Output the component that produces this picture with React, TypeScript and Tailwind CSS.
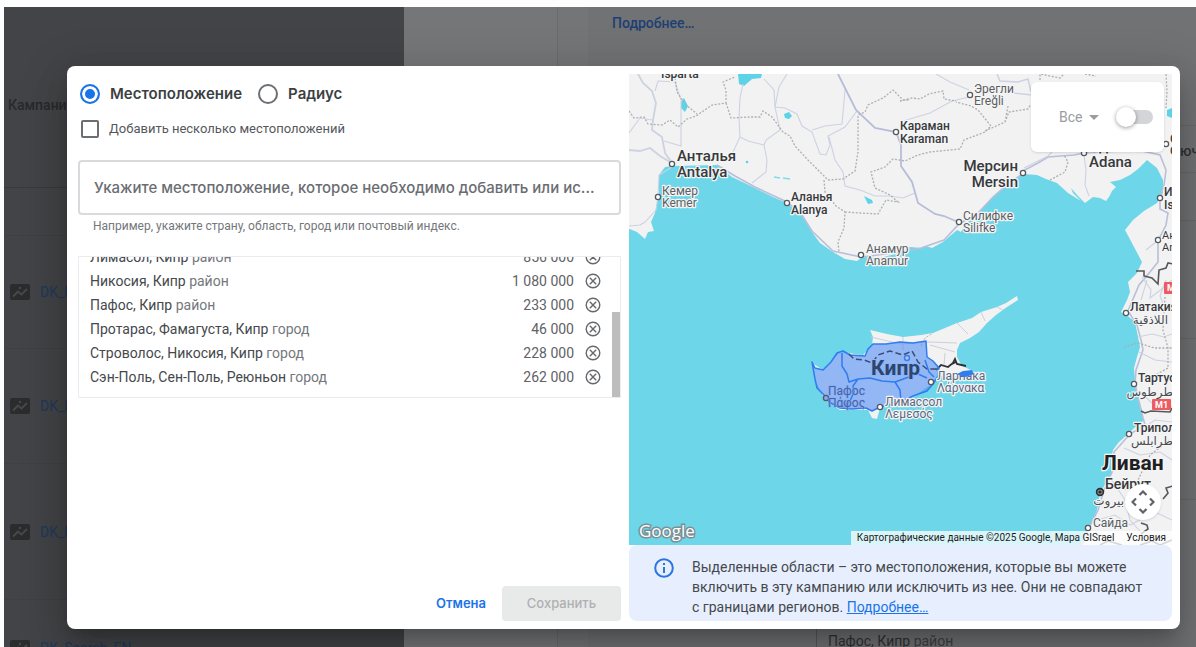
import { useState } from "react";
import clsx from "clsx";

interface Location {
  name: string;
  type: string;
  reach: string;
}

interface MapLabel {
  x: number;
  y: number;
  lines: string[];
  size: number;
  gap: number;
  weight?: number;
  color?: string;
  halo?: string;
  anchor?: "start" | "middle" | "end";
  dot?: [number, number];
}

const initialLocations: Location[] = [
  { name: "Лимасол, Кипр", type: "район", reach: "856 000" },
  { name: "Никосия, Кипр", type: "район", reach: "1 080 000" },
  { name: "Пафос, Кипр", type: "район", reach: "233 000" },
  { name: "Протарас, Фамагуста, Кипр", type: "город", reach: "46 000" },
  { name: "Строволос, Никосия, Кипр", type: "город", reach: "228 000" },
  { name: "Сэн-Поль, Сен-Поль, Реюньон", type: "город", reach: "262 000" },
];

const labels: MapLabel[] = [
  { x: 661, y: 78, lines: ["Isparta"], size: 12, gap: 12, weight: 500 },
  { x: 677, y: 161, lines: ["Анталья", "Antalya"], size: 15, gap: 16, weight: 500, dot: [672, 164] },
  { x: 662, y: 195, lines: ["Кемер", "Kemer"], size: 12, gap: 12, color: "#5a5f64", dot: [658, 197] },
  { x: 791, y: 201, lines: ["Аланья", "Alanya"], size: 12, gap: 13, weight: 500, dot: [787, 203] },
  { x: 866, y: 253, lines: ["Анамур", "Anamur"], size: 12, gap: 12, color: "#5a5f64", dot: [861, 255] },
  { x: 900, y: 130, lines: ["Караман", "Karaman"], size: 12, gap: 13, weight: 500, dot: [896, 132] },
  { x: 974, y: 93, lines: ["Эрегли", "Ereğli"], size: 12, gap: 12, color: "#5a5f64", dot: [970, 95] },
  { x: 1018, y: 171, lines: ["Мерсин", "Mersin"], size: 15, gap: 16, weight: 500, anchor: "end", dot: [1023, 173] },
  { x: 963, y: 220, lines: ["Силифке", "Silifke"], size: 12, gap: 12, color: "#5a5f64", dot: [959, 222] },
  { x: 1089, y: 151, lines: ["Адана", "Adana"], size: 15, gap: 16, weight: 500, dot: [1084, 153] },
  { x: 1170, y: 143, lines: ["Ос", "Os"], size: 12, gap: 12, weight: 500, dot: [1166, 144] },
  { x: 1164, y: 196, lines: ["Иск", "Isk"], size: 12, gap: 13, weight: 500, dot: [1160, 198] },
  { x: 1162, y: 239, lines: ["Ант", "Ant"], size: 11, gap: 12, dot: [1158, 240] },
  { x: 1130, y: 311, lines: ["Латакия"], size: 12, gap: 12, weight: 500, dot: [1126, 313] },
  { x: 1138, y: 382, lines: ["Тартус"], size: 12, gap: 12, weight: 500, dot: [1134, 384] },
  { x: 1134, y: 432, lines: ["Триполи"], size: 12, gap: 12, weight: 500, dot: [1129, 434] },
  { x: 1105, y: 489, lines: ["Бейрут"], size: 14, gap: 12, weight: 500 },
  { x: 1093, y: 527, lines: ["Сайда"], size: 12, gap: 12, color: "#5a5f64", dot: [1088, 528] },
];

const cyprusLabels: MapLabel[] = [
  { x: 937, y: 380, lines: ["Ларнака", "Λάρνακα"], size: 12, gap: 12, color: "#5b6880", dot: [931, 382] },
  { x: 885, y: 406, lines: ["Лимассол", "Λεμεσός"], size: 12, gap: 12, color: "#5b6880", dot: [880, 407] },
  { x: 828, y: 395, lines: ["Пафос", "Πάφος"], size: 12, gap: 12, color: "#4665a8", halo: "#86aaf5", dot: [826, 398] },
];

const arabicLabels = [
  { x: 1168, y: 324, text: "اللاذقية" },
  { x: 1173, y: 396, text: "طرطوس" },
  { x: 1173, y: 445, text: "طرابلس" },
  { x: 1124, y: 505, text: "بيروت" },
];

const Label = ({ label }: { label: MapLabel }) => (
  <g>
    {label.dot && (
      <circle
        cx={label.dot[0]}
        cy={label.dot[1]}
        r={2.6}
        fill={label.halo ?? "#fff"}
        stroke="#55595e"
        strokeWidth={1.3}
      />
    )}
    {label.lines.map((line, i) => (
      <text
        key={line}
        x={label.x}
        y={label.y + i * label.gap}
        fontSize={label.size}
        fontWeight={label.weight ?? 400}
        fill={label.color ?? "#37393c"}
        textAnchor={label.anchor ?? "start"}
        stroke={label.halo ?? "#f5f5f5"}
        strokeWidth={label.halo ? 1 : 2.5}
        strokeLinejoin="round"
        paintOrder="stroke"
      >
        {line}
      </text>
    ))}
  </g>
);

const MapDrawing = () => (
  <svg
    viewBox="629 74 543 471"
    preserveAspectRatio="xMidYMid slice"
    className="block h-full w-full font-['Roboto','Liberation_Sans','DejaVu_Sans',sans-serif]"
    role="img"
    aria-label="Карта"
  >
    <rect x="629" y="74" width="543" height="471" fill="#6dd6e8" />

    {/* mainland */}
    <path
      fill="#f2f2f3"
      d="M620 60H1180V550H1079L1083 540L1090 527L1097 510L1100 493L1107 481L1112 473L1111 460L1113 450L1119 442L1127 435L1133 429L1143 421L1142 410L1138 397L1135 380L1134 368L1137 357L1140 347L1138 337L1135 322L1129 317L1121 312L1127 300L1130 292L1128 282L1137 273L1142 262L1133 245L1125 230L1133 220L1144 211L1157 203L1163 193L1163 180L1157 168L1147 160L1138 169L1130 175L1120 180L1110 182L1116 187L1112 191L1109 197L1106 201L1100 198L1093 197L1085 203L1078 196L1071 188L1073 193L1081 201L1068 193L1057 183L1046 179L1037 175L1023 174L1010 183L993 197L985 205L978 214L965 224L961 232L957 230L943 242L932 248L926 246L921 248L910 247L902 252L895 254L880 258L862 257L857 261L845 259L833 252L820 243L812 232L802 215L787 203L773 197L753 187L732 177L717 165L673 166L665 167L659 175L659 193L655 213L651 222L654 231L648 232L645 239L637 232L620 225Z"
    />
    <path
      fill="#f2f2f3"
      d="M870 330L887 334L903 337L921 335L933 333L957 323L972 318L981 312L997 307L1006 303L1017 296L1018 300L1007 307L996 315L987 323L979 332L970 338L960 343L957 350L957 357L962 366L973 371L972 377L963 378L950 375L940 376L933 383L913 397L890 405L880 408L877 419L872 418L868 410L850 410L840 410L825 400L815 380L812 363L823 370L840 352L863 355L872 345L873 337Z"
    />

    {/* lakes */}
    <g fill="#5cd3e6">
      <path d="M738 74H762L761 78L752 79L744 86L739 84Z" />
      <path d="M681 102L684 98L688 106L685 112L681 108Z" />
      <path d="M784 114L789 112L792 116L789 119L785 118Z" />
      <path d="M864 196L872 200L873 203L868 204Z" />
      <path d="M1167 110L1172 108V118L1167 116Z" />
      <circle cx="747" cy="162" r="1.3" />
      <path d="M774 177L780 178M783 178L790 179" stroke="#7fdce9" strokeWidth="1.3" />
    </g>

    {/* roads */}
    <g fill="none" stroke="#cdd2e2" strokeWidth="1.1">
      <path d="M638 74L643 83L652 91L656 103L653 120L652 130L662 137L665 153L672 163" strokeWidth="1.8" />
      <path d="M629 150L640 151L650 148L660 156L670 162" strokeWidth="1.8" />
      <path d="M629 133L640 118L652 120M681 132L681 146L664 141M655 91L658 81L675 82L681 100L681 132" />
      <path d="M672 167L659 175L658 196L656 210L645 222L640 225L629 226" />
      <path d="M717 165L735 176L755 187L787 202L802 215L812 231L833 251L861 257" stroke="#b9bfd8" strokeWidth="1.6" />
      <path d="M743 84L740 98L739 118L740 137L733 152M740 137L748 141L764 145L767 160L766 172L752 183" />
      <path d="M764 79L774 90L775 107L780 130L766 140L764 145M775 107L785 108L797 114L802 126L812 132L820 154L826 155L830 145L828 136L845 127L857 111" />
      <path d="M787 74L779 87L775 107M812 130L825 126L842 124L845 90M829 137L835 160L843 172L845 186L860 190L875 196L890 196L903 198L915 193" />
      <path d="M838 74L856 110L875 128L896 132L901 145L901 166L912 182L918 203L935 214L944 216L958 222" stroke="#b6bdd8" strokeWidth="1.8" />
      <path d="M936 74L950 82L969 90M969 97L952 101L930 113L903 121" />
      <path d="M997 74L1000 81L1018 82L1028 79L1031 92M1013 93L1032 95" strokeWidth="1.6" />
      <path d="M1021 175L1008 184L993 197L978 213L959 224L944 240L921 248L900 252L862 257" stroke="#b9bfd8" strokeWidth="1.6" />
      <path d="M1021 172L1038 163L1048 157L1074 155L1084 153L1120 151L1142 151L1160 155L1166 170L1164 185L1160 198L1160 209L1168 213L1166 225L1158 241L1158 262L1150 272L1139 285L1128 311L1137 325L1141 340L1143 350L1136 370L1135 384L1141 410L1145 425L1130 434L1114 452L1113 470L1104 490L1098 510L1088 530L1082 545" stroke="#b9bfd8" strokeWidth="1.6" />
      <path d="M1024 168L1048 156L1052 152M1084 155L1086 170L1085 185L1089 196" />
      <path d="M1139 352L1155 360L1172 362M1138 337L1152 334L1164 337L1172 334M1142 277L1151 290L1150 298L1163 288L1172 280M1141 393L1152 403L1172 407" />
      <path d="M1140 430L1155 420L1172 422M1124 448L1140 455L1160 452L1172 460M1112 480L1125 500L1130 520L1148 540M1097 520L1115 515L1130 525L1155 512L1172 520" />
      <path d="M1146 250L1156 242M1147 280L1141 300M1166 280L1160 296L1166 310" />
    </g>

    {/* province borders */}
    <g fill="none" stroke="#adafb1" strokeWidth="1.3" strokeDasharray="2 1.6">
      <path d="M629 111L634 118L644 117L648 124L662 125L670 120L678 127L687 119L696 116L712 105L726 103L726 90L723 82L735 77" />
      <path d="M675 78L677 92L685 104L697 114M726 103L731 118L750 117L760 117L763 111L772 117L783 132L790 136L795 146L808 160L820 172L828 180L843 179L855 171L858 152L858 115L865 112L868 105L883 98L893 90L903 100L910 100" />
      <path d="M824 180L825 192L836 206L845 212L844 228L838 242L839 252M845 212L860 213L878 214L886 200L898 202L890 195L875 188L871 172L885 167L893 159L905 161L918 155L930 152L960 149L964 140L985 132L991 126L978 110L971 106L956 102" />
      <path d="M900 101L912 98L920 99L929 94L943 91L944 99L956 101M985 131L1005 122L1009 112L1028 109L1031 104M1005 122L1008 106" />
      <path d="M1040 80L1040 74L1060 78L1064 74M1085 74L1096 76M1166 74L1167 92L1166 108M1050 180L1065 172L1068 162L1064 155" />
      <path d="M1124 347L1138 343L1155 348L1172 348M1165 297L1163 330L1168 348L1168 368L1157 374M1170 440L1150 455L1138 480L1125 490" />
    </g>

    {/* country borders */}
    <g fill="none" stroke="#55575a" strokeWidth="1.6">
      <path d="M1136 271L1144 271L1144 276L1152 278L1158 284L1159 270L1166 268L1168 263L1173 264" />
      <path d="M1141 411L1145 413L1151 411L1170 412L1172 408" />
      <path d="M1163 499L1168 493L1166 488L1173 486M1141 523L1147 525L1148 529L1141 534M1100 545L1108 541L1122 545M1140 545L1152 541L1160 545L1172 540" />
    </g>

    {/* cyprus details */}
    <g fill="none">
      <path
        d="M871 337L900 344L930 342L957 343M903 337L903 350M957 323L968 334M981 312L985 321M945 353L944 365M930 345L955 352M997 307L1003 310"
        stroke="#cdd0da"
      />
      <path d="M921 346L925 338L933 333" stroke="#b3b5b7" strokeDasharray="2 1.6" />
      <path
        d="M936 370L941 365L948 367L953 363L955 359L957 364L966 366M952 364L956 362"
        stroke="#2f3136"
        strokeWidth="1.8"
      />
    </g>
    <g stroke="#2f7df0" strokeWidth="1.5" strokeLinejoin="round">
      <path
        fill="#4c8bf5"
        fillOpacity="0.58"
        d="M812 362L815 368L823 370L831 362L837 353L843 351L850 355L865 356L868 349L873 344L886 344L900 342L913 343L926 341L927 357L933 361L939 368L938 376L933 384L927 391L913 396L900 403L888 405L880 407L872 411L866 408L852 409L840 408L829 402L824 395L817 388L815 379Z"
      />
      <path
        fill="none"
        d="M842 353L842 366L847 374L849 382L858 379L870 378L882 381L895 382L906 378L918 374L927 378M858 379L853 386L854 392L850 401L845 405M895 382L900 390L901 401M925 360L929 372L934 377"
      />
    </g>
    <path
      d="M849 354L854 359L864 360L872 363L878 355L890 351L903 355L912 351L918 362L927 369L937 369"
      fill="none"
      stroke="#3c4c73"
      strokeWidth="1.5"
      strokeDasharray="6 3"
    />
    <circle cx="907" cy="358" r="2.5" fill="#a4c4fb" stroke="#3f7ce4" strokeWidth="1.4" />
    {cyprusLabels.map((label) => (
      <Label key={label.lines[0]} label={label} />
    ))}
    <path fill="#2f7df0" d="M957 374L963 371L972 370L974 374L966 377L961 376Z" />
    <text
      x="871"
      y="375"
      fontSize="21"
      fontWeight="700"
      fill="#2e456f"
      stroke="#8cb3f8"
      strokeWidth="2"
      paintOrder="stroke"
    >
      Кипр
    </text>

    {labels.map((label) => (
      <Label key={label.lines[0]} label={label} />
    ))}
    <circle cx="1100" cy="492" r="3.4" fill="#8b8d90" stroke="#2b2c2e" strokeWidth="1.6" />
    <circle cx="1100" cy="492" r="1.6" fill="#2b2c2e" />
    {arabicLabels.map((label) => (
      <text
        key={label.text}
        x={label.x}
        y={label.y}
        fontSize="12"
        fill="#4a4d51"
        textAnchor="end"
        stroke="#f5f5f5"
        strokeWidth="2"
        paintOrder="stroke"
      >
        {label.text}
      </text>
    ))}
    <text
      x="1102"
      y="470"
      fontSize="21"
      fontWeight="700"
      fill="#1f2022"
      stroke="#f5f5f5"
      strokeWidth="2.5"
      paintOrder="stroke"
    >
      Ливан
    </text>

    {/* motorway shields */}
    <g fill="#ee5c62">
      <rect x="1152" y="399" width="19" height="11" rx="1" />
      <rect x="1164" y="282" width="19" height="12" rx="1" />
    </g>
    <g fill="#fff" fontSize="9" fontWeight="700">
      <text x="1155" y="408">M1</text>
      <text x="1167" y="291">M4</text>
    </g>
  </svg>
);

const ChartIcon = () => (
  <svg viewBox="0 0 20 16" className="h-4 w-5 shrink-0" aria-hidden="true">
    <rect width="20" height="16" rx="2" fill="#2b2c2e" />
    <path
      d="M3 12.500L8 7.500L11.500 10.500L17 5"
      fill="none"
      stroke="#48494c"
      strokeWidth="1.8"
    />
    <circle cx="10" cy="4" r="1.200" fill="#48494c" />
  </svg>
);

const RemoveIcon = () => (
  <svg viewBox="0 0 16 16" className="h-4 w-4" fill="none" stroke="#66696d" strokeWidth="1.400" aria-hidden="true">
    <circle cx="8" cy="8" r="6.800" />
    <path d="M4.800 4.800L11.200 11.200M11.200 4.800L4.800 11.200" />
  </svg>
);

const Page = () => (
  <div className="flex h-full bg-[#757678]">
    <div className="w-[400px] shrink-0 bg-[#434447] text-sm text-[#28292b]">
      <div className="flex h-[181px] items-center border-b border-[#393a3d] pt-4 pl-1 font-medium">
        Кампания
      </div>
      <div className="h-12 border-b border-[#3f4043]" />
      {["h-[113px]", "h-[115px]", "h-[136px]"].map((height) => (
        <div
          key={height}
          className={clsx("flex items-center gap-[10px] border-b border-[#3f4043] pl-[6px]", height)}
        >
          <ChartIcon />
          <span className="text-[#20395a]">DK_PMax_RU</span>
        </div>
      ))}
      <div className="flex h-24 items-center gap-[10px] pl-[6px]">
        <ChartIcon />
        <span className="text-[#20395a]">DK_Search_EN</span>
      </div>
    </div>
    <div className="flex w-[184px] shrink-0 pl-[153px]">
      <div className="flex-1 border-l border-[#6a6b6d] bg-[#747577]" />
    </div>
    <div className="flex flex-1 flex-col justify-between overflow-hidden bg-[#717274]">
      <a href="#more" className="pt-[6px] pl-6 text-sm leading-5 font-medium text-[#1d3f73]">
        Подробнее…
      </a>
      <div className="flex flex-1 flex-col items-end pt-[92px]">
        <div className="flex h-12 w-4 items-center border-y border-[#68696b] pt-1 text-sm font-medium text-[#303133]">
          ючевые
        </div>
        <div className="h-12 w-4 border-b border-[#68696b]" />
        <div className="h-[118px] w-4 border-b border-[#68696b]" />
        <div className="h-[161px] w-4 border-b border-[#68696b]" />
      </div>
      <div className="ml-[228px] h-[18px] border-l border-[#58595b] pt-[2px] pl-[11px] text-sm leading-5 text-[#303133]">
        Пафос, Кипр <span className="text-[#3f4042]">район</span>
      </div>
    </div>
  </div>
);

const MapPanel = () => {
  const [enabled, setEnabled] = useState(false);

  return (
    <div className="relative min-h-0 flex-1 overflow-hidden">
      <MapDrawing />
      <div className="absolute top-2 right-2 flex h-[70px] w-[133px] items-center justify-between rounded-md bg-white pr-[10px] pl-7 shadow">
        <label className="relative flex items-center text-sm text-[#9a9c9f]">
          <select aria-label="Фильтр" className="w-10 appearance-none bg-transparent outline-none">
            <option>Все</option>
          </select>
          <span className="pointer-events-none absolute right-0 border-x-[5px] border-t-[5px] border-x-transparent border-t-[#9a9c9f]" />
        </label>
        <label className="relative flex h-5 w-[38px] items-center">
          <input
            type="checkbox"
            role="switch"
            aria-label="Показать на карте"
            className="peer sr-only"
            checked={enabled}
            onChange={() => setEnabled(!enabled)}
          />
          <span className="ml-1 h-[14px] w-[33px] rounded-full bg-[#d4d5d8] peer-checked:bg-blue-300" />
          <span className="absolute left-0 h-5 w-5 rounded-full bg-white shadow-[0_1px_4px_rgba(0,0,0,0.4)] peer-checked:left-[18px]" />
        </label>
      </div>
      <button
        type="button"
        aria-label="Управление камерой"
        className="absolute right-[11px] bottom-[25px] flex h-9 w-9 items-center justify-center rounded-full bg-white shadow"
      >
        <svg viewBox="0 0 24 24" className="h-6 w-6" fill="none" stroke="#5f6368" strokeWidth="2.200">
          <path d="M8.500 5L12 1.500L15.500 5M8.500 19L12 22.500L15.500 19M5 8.500L1.500 12L5 15.500M19 8.500L22.500 12L19 15.500" />
        </svg>
      </button>
      <span className="absolute bottom-[2px] left-[10px] text-[17px] leading-6 text-white font-['Open_Sans',sans-serif] [-webkit-text-stroke:3px_#7c8f94] [paint-order:stroke]">
        Google
      </span>
      <div className="absolute right-0 bottom-0 flex h-[14px] items-center gap-3 bg-white/75 px-[6px] text-[10px] leading-none text-[#1c1c1c]">
        <span>Картографические данные ©2025 Google, Mapa GISrael</span>
        <a href="#terms">Условия</a>
      </div>
    </div>
  );
};

const App = () => {
  const [mode, setMode] = useState("location");
  const [bulk, setBulk] = useState(false);
  const [query, setQuery] = useState("");
  const [locations, setLocations] = useState(initialLocations);

  const removeLocation = (name: string) => {
    setLocations(locations.filter((location) => location.name !== name));
  };

  return (
    <main className="relative h-screen overflow-hidden bg-[#fdfdfe] pt-[7px] pl-1 font-['Roboto','Liberation_Sans',sans-serif]">
      <Page />
      <div className="absolute inset-0 pt-[66px] pr-4 pb-[18px] pl-[67px]">
        <div
          role="dialog"
          aria-label="Местоположения"
          className="flex h-full rounded-lg bg-white py-2 pr-2 pl-[11px] shadow-[0_11px_15px_-7px_rgba(0,0,0,0.2),0_24px_38px_3px_rgba(0,0,0,0.14),0_9px_46px_8px_rgba(0,0,0,0.12)]"
        >
          <form
            className="mr-2 flex flex-1 flex-col"
            onSubmit={(e) => e.preventDefault()}
          >
            <div className="flex h-10 items-center gap-4 pl-[2px] text-[15px] font-semibold text-[#3c3f43] font-['Inter',sans-serif]">
              {[
                { id: "location", title: "Местоположение" },
                { id: "radius", title: "Радиус" },
              ].map((item) => (
                <label key={item.id} className="flex items-center gap-[10px]">
                  <input
                    type="radio"
                    name="mode"
                    className="h-5 w-5 appearance-none rounded-full border-2 border-[#6b6e72] checked:border-[#1a73e8] checked:bg-[#1a73e8] checked:shadow-[inset_0_0_0_3px_white]"
                    checked={mode === item.id}
                    onChange={() => setMode(item.id)}
                  />
                  {item.title}
                </label>
              ))}
            </div>
            <label className="flex h-[30px] items-center gap-[10px] pl-[3px] text-[13px] text-[#55585c]">
              <input
                type="checkbox"
                className="h-[18px] w-[18px] appearance-none rounded-xs border-2 border-[#6b6e72] checked:bg-[#1a73e8]"
                checked={bulk}
                onChange={() => setBulk(!bulk)}
              />
              Добавить несколько местоположений
            </label>
            <input
              type="text"
              aria-label="Местоположение"
              className="mt-4 h-[55px] w-full shrink-0 rounded border-2 border-[#d9dadb] px-[14px] text-[15px] font-medium text-ellipsis text-[#303236] outline-none placeholder:text-[#6a6d71] font-['Inter',sans-serif]"
              placeholder="Укажите местоположение, которое необходимо добавить или ис..."
              value={query}
              onChange={(e) => setQuery(e.target.value)}
            />
            <p className="pt-[1px] pl-[15px] text-xs leading-5 text-[#74777b]">
              Например, укажите страну, область, город или почтовый индекс.
            </p>
            <div className="relative mt-5 flex h-[142px] shrink-0 flex-col justify-end overflow-hidden border border-[#ececee] pb-2">
              <table className="w-full text-sm text-[#45484c]">
                <tbody>
                  {locations.map((location) => (
                    <tr key={location.name} className="h-6">
                      <td className="pl-[11px]">
                        {location.name}{" "}
                        <span className="text-[#74777b]">{location.type}</span>
                      </td>
                      <td className="text-right text-[#5f6266]">{location.reach}</td>
                      <td className="w-[46px] pl-[11px]">
                        <button
                          type="button"
                          aria-label="Удалить"
                          className="block"
                          onClick={() => removeLocation(location.name)}
                        >
                          <RemoveIcon />
                        </button>
                      </td>
                    </tr>
                  ))}
                </tbody>
              </table>
              <div className="absolute right-0 bottom-0 h-[85px] w-2 bg-[#bdbdbd]" />
            </div>
            <div className="mt-auto flex items-center justify-end gap-4 text-[13px] font-medium font-['Inter',sans-serif]">
              <button type="button" className="font-semibold text-[#1a73e8]">
                Отмена
              </button>
              <button
                type="submit"
                disabled
                className="h-[35px] w-[119px] rounded bg-[#e8e9e9] text-[#aeb0b2]"
              >
                Сохранить
              </button>
            </div>
          </form>
          <div className="flex flex-1 flex-col">
            <MapPanel />
            <div className="flex h-[76px] shrink-0 gap-[18px] rounded-lg bg-[#e7efff] pt-3 pl-[25px] text-sm leading-5 text-[#45484c]">
              <svg viewBox="0 0 20 20" className="mt-[1px] h-5 w-5 shrink-0" fill="none" stroke="#2b76dc" strokeWidth="2" aria-hidden="true">
                <circle cx="10" cy="10" r="8.800" />
                <path d="M10 9V15M10 5V7" />
              </svg>
              <p className="whitespace-nowrap">
                Выделенные области – это местоположения, которые вы можете
                <br />
                включить в эту кампанию или исключить из нее. Они не совпадают
                <br />с границами регионов.{" "}
                <a href="#regions" className="text-[#1a73e8] underline">
                  Подробнее…
                </a>
              </p>
            </div>
          </div>
        </div>
      </div>
    </main>
  );
};

export default App;
